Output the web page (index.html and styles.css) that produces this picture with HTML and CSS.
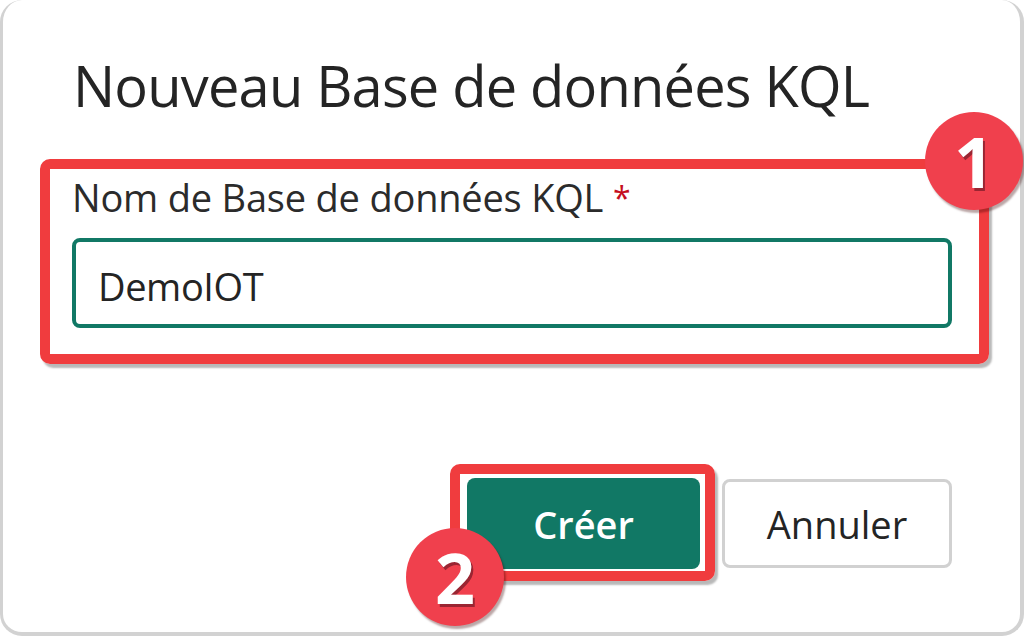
FILE: index.html
```html
<!DOCTYPE html>
<html lang="fr">
<head>
<meta charset="utf-8">
<title>Nouveau Base de données KQL</title>
<link rel="stylesheet" href="styles.css">
</head>
<body>
<div class="dialog">
  <h1 class="title">Nouveau Base de données KQL</h1>
  <div class="callout field-callout">
    <label class="label" for="dbname">Nom de Base de données KQL <span class="req">*</span></label>
    <input class="input" id="dbname" type="text" value="DemoIOT">
    <span class="badge badge-1">1</span>
  </div>
  <div class="footer">
    <div class="callout btn-callout">
      <button class="btn btn-primary">Créer</button>
      <span class="badge badge-2">2</span>
    </div>
    <button class="btn btn-secondary">Annuler</button>
  </div>
</div>
</body>
</html>
```

FILE: styles.css
```css
* { box-sizing: border-box; }
html, body {
  margin: 0;
  padding: 0;
  background: #ffffff;
  width: 1024px;
  height: 636px;
  overflow: hidden;
}
body {
  font-family: "Open Sans", "Noto Sans", "Liberation Sans", sans-serif;
  color: #242424;
}
.dialog {
  width: 1024px;
  height: 636px;
  background: #ffffff;
  border-left: 3px solid #d2d2d2;
  border-right: 4px solid #d2d2d2;
  border-bottom: 4px solid #d2d2d2;
  border-top: 0;
  border-radius: 22px;
  padding: 52px 31px 0 37px;
  display: flex;
  flex-direction: column;
}
.title {
  margin: 0;
  padding-left: 33px;
  font-size: 56px;
  line-height: 67px;
  font-weight: 400;
  color: #242424;
  letter-spacing: -0.8px;
}
.callout {
  position: relative;
  border: 10px solid #f03c3e;
  border-radius: 10px;
  box-shadow: 3px 4px 2px rgba(0,0,0,0.28);
}
.field-callout {
  margin-top: 40px;
  padding: 4px 27px 26px 22px;
  display: flex;
  flex-direction: column;
}
.label {
  font-size: 38px;
  line-height: 48px;
  color: #2b2b2b;
  letter-spacing: -0.2px;
}
.req {
  color: #c50f1f;
  font-size: 32px;
  vertical-align: 2px;
}
.input {
  margin-top: 16px;
  height: 90px;
  width: 100%;
  border: 4px solid #117865;
  border-radius: 8px;
  padding: 6px 20px 0 22px;
  font-family: inherit;
  font-size: 38px;
  color: #242424;
  outline: none;
  background: #fff;
  letter-spacing: -0.4px;
}
.footer {
  margin-top: 100px;
  display: flex;
  justify-content: flex-end;
  align-items: flex-start;
  gap: 7px;
  padding-right: 37px;
}
.btn-callout {
  padding: 4px 5px 2px 7px;
}
.btn {
  font-family: inherit;
  font-size: 38px;
  font-weight: 600;
  border-radius: 8px;
  cursor: pointer;
  display: flex;
  align-items: center;
  justify-content: center;
  padding: 0;
}
.btn-primary {
  width: 233px;
  height: 91px;
  background: #117865;
  border: 0;
  color: #ffffff;
}
.btn-secondary {
  margin-top: 15px;
  width: 230px;
  height: 89px;
  background: #ffffff;
  border: 3px solid #d1d1d1;
  color: #242424;
  font-weight: 500;
}
.badge {
  position: absolute;
  width: 98px;
  height: 98px;
  border-radius: 50%;
  background: #f0404d;
  color: #ffffff;
  font-family: "Open Sans", "Liberation Sans", sans-serif;
  font-weight: 700;
  font-size: 70px;
  line-height: 98px;
  text-align: center;
  box-shadow: 2px 3px 2px rgba(60,0,0,0.35);
  text-shadow: 2px 3px 0 #9a2532;
  z-index: 2;
}
.badge-1 {
  right: -44px;
  top: -57px;
}
.badge-2 {
  left: -54px;
  top: 54px;
}
```
